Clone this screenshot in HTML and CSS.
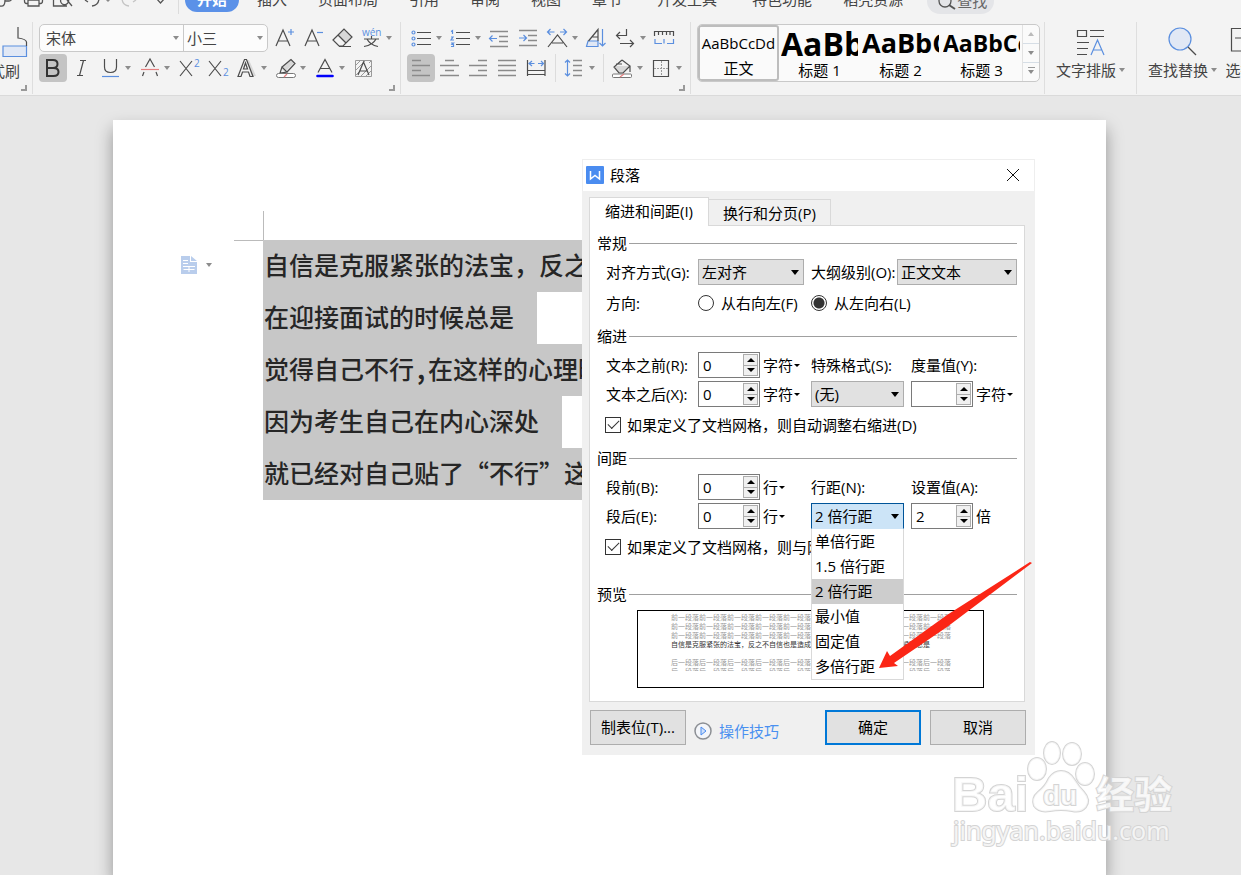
FILE: index.html
```html
<!DOCTYPE html>
<html lang="zh-CN">
<head>
<meta charset="utf-8">
<title>段落</title>
<link rel="stylesheet" href="styles.css">
</head>
<body>
<div class="app">
  <header class="ribbon">
    <nav class="menu">
      <div class="quick">
        <button class="quick-btn" aria-label="输出"><svg class="line" width="18" height="14"><path d="M0 6C4 7 5 4 5 0M5 1H9Q12 1 11-2"/></svg></button>
        <button class="quick-btn" aria-label="打印"><svg class="line" width="32" height="14"><path d="M10 3.5H8.500Q6.500 3.500 6.500 1V-1M21 3.500H22.500Q24.500 3.500 24.500 1V-1M10 0V6H21V0ZM10-1H21"/></svg></button>
        <button class="quick-btn" aria-label="打印预览"><svg class="line" width="30" height="14"><path d="M3.500-2V6H17M16-3a4 4 0 1 1-5 2M17 0L22 6"/></svg></button>
        <button class="quick-btn" aria-label="撤销"><svg class="line" width="36" height="14"><path d="M5 0L8 2M12 6Q19 5 19-2"/><path class="solid" d="M25-1H31L28 2Z"/></svg></button>
        <button class="quick-btn" aria-label="恢复"><svg class="line faint" width="34" height="14"><path d="M13 6Q6 5 6-2M20 0L17 2"/></svg></button>
        <button class="quick-btn" aria-label="更多"><svg class="line" width="28" height="14"><path d="M6-2L10.500 3L15-2"/></svg></button>
      </div>
      <button class="tab current">开始</button>
      <button class="tab">插入</button>
      <button class="tab">页面布局</button>
      <button class="tab">引用</button>
      <button class="tab">审阅</button>
      <button class="tab">视图</button>
      <button class="tab">章节</button>
      <button class="tab wide">开发工具</button>
      <button class="tab">特色功能</button>
      <button class="tab">稻壳资源</button>
      <button class="find"><svg class="line" width="20" height="24" viewBox="0 0 20 24"><circle cx="8" cy="12" r="6"/><path d="M12 16L18 20" stroke-width="2"/></svg>查找</button>
    </nav>

    <div class="groups">
      <section class="group clip">
        <button class="brush"><svg width="40" height="38" viewBox="0 0 40 38"><path class="fillb" d="M5 22H28.500V32.500H5Z"/><path class="dk" d="M20 3V14Q28 15 28.500 18V22"/></svg><span>格式刷</span></button>
        <svg class="launcher" width="8" height="8"><path d="M1 6H6V1"/></svg>
      </section>

      <section class="group">
        <div class="tools">
          <div class="combo">
            <label class="combo-font"><input type="text" value="宋体" aria-label="字体"><i class="caret"></i></label>
            <label class="combo-size"><input type="text" value="小三" aria-label="字号"><i class="caret"></i></label>
          </div>
          <button class="tool" aria-label="增大字号"><svg><path class="dk" d="M6 22L13 6L20 22M8 17H18"/><path class="bl" d="M18 8H24M21 5V11"/></svg></button>
          <button class="tool" aria-label="减小字号"><svg><path class="dk" d="M6 22L13 6L20 22M8 17H18"/><path class="bl" d="M18 8.500H24"/></svg></button>
          <button class="tool" aria-label="清除格式"><svg><path class="fillg" d="M10 11L16 5L24 13L18 19Z"/><path class="dk" d="M5 16L16 5L24 13L15 22H11ZM10 11L18 19M11 22.500H23"/></svg></button>
          <button class="tool more" aria-label="拼音指南"><svg><text class="tiny" x="5" y="12">wén</text><path class="dk" d="M7 15H22M14.500 12V15M10 15Q13 21 21 22.500M19 15Q16 21 7 22.500"/></svg><i class="caret"></i></button>
        </div>
        <div class="tools">
          <button class="tool on" aria-label="加粗"><svg class="sq"><path class="dk heavy" d="M8 6H14Q18.500 6 18.500 10T14 14H8ZM8 14H14.500Q19.500 14 19.500 18T14.500 22H8Z"/></svg></button>
          <button class="tool" aria-label="倾斜"><svg><path class="dk" d="M13 6.500H19M16.500 6.500L12.500 21.500M10 21.500H16"/></svg></button>
          <button class="tool more" aria-label="下划线"><svg><path class="dk" d="M8.500 5V13Q8.500 18.500 14.500 18.500T20.500 13V5"/><path class="bl" d="M6 22.500H23"/></svg><i class="caret"></i></button>
          <button class="tool more" aria-label="删除线"><svg><path class="dk" d="M10.500 13L15 5L19.500 13M9 18L7.500 22M21 18L22.500 22"/><path class="rd" d="M6 15.500H24"/></svg><i class="caret"></i></button>
          <button class="tool" aria-label="上标"><svg><path class="dk" d="M6 7L18 22M18 7L6 22"/><text class="tiny" x="20" y="13">2</text></svg></button>
          <button class="tool" aria-label="下标"><svg><path class="dk" d="M6 7L18 22M18 7L6 22"/><text class="tiny" x="20" y="22">2</text></svg></button>
          <button class="tool more" aria-label="文字效果"><svg><path class="fillg" d="M14 6H17L24 22H20Z"/><path class="dk" d="M6 22.500L12.500 5.500H14.500L21 22.500H18L16.500 18H10.500L9 22.500ZM11.500 15H15.500L13.500 9Z"/></svg><i class="caret"></i></button>
          <button class="tool more" aria-label="突出显示"><svg><path class="fillg" d="M10 14L19 5L23 9L14 18Z"/><path class="dk" d="M11 13L20 5.500L24 9.500L16 18M11 13L9 19L16 18Z"/><rect class="paper" x="5.500" y="19.500" width="19" height="4" rx="2"/><path class="rd" d="M13 23L16 20"/></svg><i class="caret"></i></button>
          <button class="tool more" aria-label="字体颜色"><svg><path class="dk" d="M8 18.500L15 5.500L22 18.500M10.500 14.500H19.500"/><path class="ink" d="M7.500 22H22.500"/></svg><i class="caret"></i></button>
          <button class="tool" aria-label="字符底纹"><svg><path class="gr" d="M6.500 6.500H22.500V22.500H6.500ZM7 11L11 7M7 16L16 7M12 22L22 12M17 22L22 17M7 21L10 18M20 9L22 7"/><path class="dk" d="M9 21L14.500 8L20 21M11 17H18"/></svg></button>
        </div>
        <svg class="launcher" width="8" height="8"><path d="M1 6H6V1"/></svg>
      </section>

      <section class="group">
        <div class="tools">
          <button class="tool more" aria-label="项目符号"><svg><g class="bl"><circle cx="6.500" cy="8.500" r="1.500"/><circle cx="6.500" cy="14.500" r="1.500"/><circle cx="6.500" cy="20.500" r="1.500"/></g><path class="dk" d="M10 8.500H24M10 14.500H24M10 20.500H24"/></svg><i class="caret"></i></button>
          <button class="tool more" aria-label="编号"><svg><path class="bl" d="M5 7.500L6.500 6.500V10M5 13H7L5 16H8M5 19H7.500L6 20.500H7.500V22.500H5"/><path class="dk" d="M10 8.500H24M10 14.500H24M10 20.500H24"/></svg><i class="caret"></i></button>
          <button class="tool" aria-label="减少缩进量"><svg><path class="gr2" d="M5 7.500H23M14 12.500H23M14 17.500H23M5 22.500H23"/><path class="bl" d="M12 14.500H4.500M7.500 11.500L4.500 14.500L7.500 17.500"/></svg></button>
          <button class="tool" aria-label="增加缩进量"><svg><path class="gr2" d="M5 6.500H23M14 11.500H23M14 16.500H23M5 21.500H23"/><path class="bl" d="M5 14H12.500M9.500 11L12.500 14L9.500 17"/></svg></button>
          <button class="tool more" aria-label="中文版式"><svg><path class="dk" d="M5 23L14.500 11L24 23M9 19H20"/><path class="bl" d="M11.500 8H4.500M7.500 5L4.500 8L7.500 11M17 8H23.500M20.500 5L23.500 8L20.500 11"/></svg><i class="caret"></i></button>
          <button class="tool" aria-label="排序"><svg><path class="fillb" d="M6 17H16V22.500H4.500Z"/><path class="dk" d="M6.500 17L16 5.500V17M10.500 13H16"/><path class="bl" d="M20.500 5V22M17.500 19L20.500 22L23.500 19"/></svg></button>
          <button class="tool more" aria-label="显示段落标记"><svg><path class="dk" d="M15.500 5V11.500H5.500M9 8L5.500 11.500L9 15M9 19.500H22.500M19 16L22.500 19.500L19 23"/></svg><i class="caret"></i></button>
          <button class="tool" aria-label="制表位"><svg><path class="dk" d="M4.500 12V7.500H23.500V12M8.500 8V11M12.500 8V11M16.500 8V11M20 8V11"/><path class="bl" d="M5 15V19.500H12M14 15V19.500M17 19.500H23.500V15"/></svg></button>
        </div>
        <div class="tools">
          <button class="tool on" aria-label="左对齐"><svg class="sq"><path class="gr2" d="M5 6.500H14M5 11.500H23M5 16.500H14M5 21.500H23"/></svg></button>
          <button class="tool" aria-label="居中对齐"><svg><path class="gr2" d="M10 6.500H19M5 11.500H24M10 16.500H19M5 21.500H24"/></svg></button>
          <button class="tool" aria-label="右对齐"><svg><path class="gr2" d="M14 6.500H23M5 11.500H23M14 16.500H23M5 21.500H23"/></svg></button>
          <button class="tool" aria-label="两端对齐"><svg><path class="gr2" d="M5 6.500H23M5 11.500H23M5 16.500H23M5 21.500H23"/></svg></button>
          <button class="tool" aria-label="分散对齐"><svg><path class="dk" d="M5.500 6V22M23 6V22M6 16.500H23M6 20.500H23"/><path class="bl" d="M7 9.500H12.500M10 7L7 9.500L10 12M16 9.500H21.500M19 7L21.500 9.500L19 12"/></svg></button>
          <i class="split"></i>
          <button class="tool more" aria-label="行距"><svg><path class="bl" d="M7.500 6V22M5 8.500L7.500 6L10 8.500M5 19.500L7.500 22L10 19.500"/><path class="gr2" d="M13 6.500H22M13 11.500H22M13 16.500H22M13 21.500H22"/></svg><i class="caret"></i></button>
          <i class="split"></i>
          <button class="tool more" aria-label="底纹颜色"><svg><path class="fillg" d="M6 12H22L15 19H11Z"/><path class="dk" d="M14 6L22 12L15 19H11L6 13L14 6M8 10H14M22 12V18"/><rect class="paper" x="4.500" y="20" width="19" height="3.500" rx="1"/><path class="rd" d="M12 23L16 20"/></svg><i class="caret"></i></button>
          <button class="tool more" aria-label="边框"><svg><path class="dk" d="M6.500 6.500H21.500V22.500H6.500Z"/><path class="gr dash" d="M14.500 7V22M7 14.500H21"/></svg><i class="caret"></i></button>
        </div>
        <svg class="launcher" width="8" height="8"><path d="M1 6H6V1"/></svg>
      </section>

      <section class="group">
        <div class="gallery">
          <button class="style picked"><span class="sample">AaBbCcDd</span><span>正文</span></button>
          <button class="style"><span class="sample h1">AaBbCc</span><span>标题 1</span></button>
          <button class="style"><span class="sample h2">AaBbCc</span><span>标题 2</span></button>
          <button class="style"><span class="sample h3">AaBbCc</span><span>标题 3</span></button>
          <div class="scroller">
            <button aria-label="向上"><i class="caret up"></i></button>
            <button aria-label="向下"><i class="caret"></i></button>
            <button aria-label="全部样式"><i class="caret bar"></i></button>
          </div>
        </div>
      </section>

      <section class="group">
        <button class="big"><svg width="34" height="36" viewBox="0 0 34 36"><path class="dk" d="M4.500 6.500H13.500V12.500H4.500ZM17 6.500H31M17 12.500H31M4 18.500H16M4 24.500H15M4 30.500H14"/><path class="bl" d="M18 31L24.500 16L31 31M20 26H29"/></svg><span class="big-text">文字排版<i class="caret"></i></span></button>
      </section>
      <section class="group last">
        <button class="big"><svg width="34" height="36" viewBox="0 0 34 36"><circle class="fillb" cx="15" cy="15" r="11"/><path class="dk" d="M23 23L31 31"/></svg><span class="big-text">查找替换<i class="caret"></i></span></button>
        <button class="big"><svg width="40" height="36" viewBox="0 0 40 36"><path class="dk" d="M7.500 4.500H34V27H7.500ZM11 14H20"/></svg><span class="big-text">选择<i class="caret"></i></span></button>
      </section>
    </div>
  </header>

  <main class="desk">
    <article class="page">
      <aside class="gutter">
        <div class="crop"></div>
        <button class="mark" aria-label="段落布局"><svg width="16" height="18" viewBox="0 0 16 18"><path fill="#b9cdec" d="M0 0H9V6H16V18H0ZM10 0L16 5H10Z"/><path stroke="#fff" fill="none" d="M2 4.500H7M2 7.500H7M2 10.500H14M2.500 13.500H13.500M8 11V16"/></svg><i class="caret"></i></button>
      </aside>
      <div class="text">
        <p><span>自信是克服紧张的法宝，反之不自信也是造成</span></p>
        <p><span class="end">在迎接面试的时候总是</span></p>
        <p><span>觉得自己不行<b>,</b>在这样的心理暗示下</span></p>
        <p><span class="end">因为考生自己在内心深处</span></p>
        <p><span>就已经对自己贴了“不行”这样的标签</span></p>
      </div>
    </article>
  </main>

  <form class="dialog" role="dialog" aria-label="段落">
    <div class="title">
      <svg width="18" height="18" viewBox="0 0 18 18"><rect width="18" height="18" rx="1" fill="#4a8cf0"/><path d="M4.500 5V13L9 9.500L13.500 13V5" fill="none" stroke="#fff" stroke-width="1.500"/></svg>
      <span>段落</span>
      <button type="button" class="close" aria-label="关闭"><svg width="14" height="14"><path d="M1 1L13 13M13 1L1 13" stroke="#111" fill="none"/></svg></button>
    </div>
    <div class="tabs">
      <button type="button" class="dtab active">缩进和间距(I)</button>
      <button type="button" class="dtab">换行和分页(P)</button>
    </div>
    <div class="panel">
      <h2>常规</h2>
      <div class="row general">
        <label for="align">对齐方式(G):</label>
        <span class="select"><select id="align"><option>左对齐</option></select></span>
        <label for="level" class="next">大纲级别(O):</label>
        <span class="select"><select id="level"><option>正文文本</option></select></span>
      </div>
      <div class="row direction">
        <span>方向:</span>
        <label class="radio rtl"><input type="radio" name="dir">从右向左(F)</label>
        <label class="radio"><input type="radio" name="dir" checked>从左向右(L)</label>
      </div>

      <h2>缩进</h2>
      <div class="grid">
        <label for="before">文本之前(R):</label>
        <span class="spin"><input id="before" type="text" value="0"><span class="steps"><button type="button" aria-label="增加"></button><button type="button" aria-label="减少"></button></span></span>
        <button type="button" class="unit">字符<i class="drop"></i></button>
        <label for="special">特殊格式(S):</label>
        <label for="measure" class="span">度量值(Y):</label>
        <label for="after">文本之后(X):</label>
        <span class="spin"><input id="after" type="text" value="0"><span class="steps"><button type="button" aria-label="增加"></button><button type="button" aria-label="减少"></button></span></span>
        <button type="button" class="unit">字符<i class="drop"></i></button>
        <span class="select"><select id="special"><option>(无)</option></select></span>
        <span class="spin"><input id="measure" type="text" value=""><span class="steps"><button type="button" aria-label="增加"></button><button type="button" aria-label="减少"></button></span></span>
        <button type="button" class="unit">字符<i class="drop"></i></button>
      </div>
      <label class="check"><input type="checkbox" checked>如果定义了文档网格，则自动调整右缩进(D)</label>

      <h2>间距</h2>
      <div class="grid">
        <label for="above">段前(B):</label>
        <span class="spin"><input id="above" type="text" value="0"><span class="steps"><button type="button" aria-label="增加"></button><button type="button" aria-label="减少"></button></span></span>
        <button type="button" class="unit">行<i class="drop"></i></button>
        <label for="leading">行距(N):</label>
        <label for="value" class="span">设置值(A):</label>
        <label for="below">段后(E):</label>
        <span class="spin"><input id="below" type="text" value="0"><span class="steps"><button type="button" aria-label="增加"></button><button type="button" aria-label="减少"></button></span></span>
        <button type="button" class="unit">行<i class="drop"></i></button>
        <span class="select open"><select id="leading"><option>2 倍行距</option></select>
          <ul class="options" role="listbox">
            <li role="option">单倍行距</li>
            <li role="option">1.5 倍行距</li>
            <li role="option" class="hover">2 倍行距</li>
            <li role="option">最小值</li>
            <li role="option">固定值</li>
            <li role="option">多倍行距</li>
          </ul>
        </span>
        <span class="spin"><input id="value" type="text" value="2"><span class="steps"><button type="button" aria-label="增加"></button><button type="button" aria-label="减少"></button></span></span>
        <span class="unit">倍</span>
      </div>
      <label class="check"><input type="checkbox" checked>如果定义了文档网格，则与网格对齐(W)</label>

      <h2 class="apart">预览</h2>
      <div class="preview">
        <p>前一段落前一段落前一段落前一段落前一段落前一段落前一段落前一段落前一段落前一段落</p>
        <p>前一段落前一段落前一段落前一段落前一段落前一段落前一段落前一段落前一段落前一段落</p>
        <p>前一段落前一段落前一段落前一段落前一段落前一段落前一段落前一段落前一段落前一段落</p>
        <p class="own">自信是克服紧张的法宝，反之不自信也是造成紧张的根源，在迎接面试的时候我总是</p>
        <p>后一段落后一段落后一段落后一段落后一段落后一段落后一段落后一段落后一段落后一段落</p>
        <p class="cut">后一段落后一段落后一段落后一段落后一段落后一段落后一段落后一段落后一段落后一段落</p>
      </div>
    </div>
    <div class="actions">
      <button type="button" class="push">制表位(T)...</button>
      <a href="#" class="tips"><svg width="18" height="18" viewBox="0 0 18 18"><circle cx="9" cy="9" r="8" fill="#f4f6fa" stroke="#8c8f94" stroke-width="1.500"/><path d="M7 5L12 9L7 13Z" fill="#cfe0fa" stroke="#4a8cf0"/></svg>操作技巧</a>
      <button type="button" class="push main">确定</button>
      <button type="button" class="push">取消</button>
    </div>
    <svg class="pointer" width="156" height="112" viewBox="0 0 156 112"><path fill="#fb2616" d="M1 107L9 90L12 95L69 54L152 1L154 2L69 66L16 102L20 105Z"/></svg>
  </form>

  <svg class="watermark" width="240" height="116" viewBox="0 0 240 116" aria-label="Baidu 经验">
    <g class="wm">
      <text class="wm-a" x="9" y="72">Bai</text>
      <g transform="translate(27 1)">
        <ellipse cx="67" cy="29" rx="9" ry="11"/><ellipse cx="82" cy="13" rx="8" ry="11"/><ellipse cx="102" cy="14" rx="9" ry="11"/><ellipse cx="115" cy="34" rx="9" ry="11"/>
        <path d="M91 31Q99 31 104 39T114 52Q121 60 116 67Q111 73 102 71Q91 69 80 71Q69 73 64 66Q61 58 68 52Q75 47 79 38Q84 31 91 31Z"/>
      </g>
      <text class="wm-d" x="100" y="66">du</text>
      <text class="wm-c" x="153" y="69">经验</text>
      <text class="wm-u" x="10" y="101">jingyan.baidu.com</text>
    </g>
  </svg>
</div>
</body>
</html>
```
FILE: styles.css
```css
* { box-sizing: border-box; }
body {
  margin: 0;
  font: 15px/22px "Open Sans", "Noto Sans CJK SC", sans-serif;
  color: #000;
}
button, input, select { font: inherit; color: inherit; margin: 0; padding: 0; border: 0; background: none; border-radius: 0; }
button { white-space: nowrap; }
h2, p, ul { margin: 0; padding: 0; }
svg { display: block; flex: none; }

.app { position: relative; height: 100vh; overflow: hidden; display: flex; flex-direction: column; background: #e7e7e7; }

/* ribbon */
.ribbon { flex: none; background: #f3f3f3; border-bottom: 1px solid #dadada; color: #444; overflow: hidden; }
.menu { height: 22px; display: flex; align-items: flex-start; overflow: hidden; }
.quick { display: flex; width: 179px; height: 14px; flex: none; border-right: 1px solid #dcdcdc; margin-right: 6px; }
.tab { flex: none; height: 24px; line-height: 22px; margin: -12px 31px 0 0; padding-bottom: 2px; }
.tab.current { width: 54px; background: #5b91e8; color: #fff; font-weight: 700; border-radius: 12px; margin-right: 18px; }
.tab.wide { padding: 0 4px 2px; }
.find { flex: none; display: flex; align-items: center; width: 67px; height: 26px; margin: -12px 0 0 -7px; padding: 0 0 1px 10px; border-radius: 13px; background: #e4e5e8; color: #666; }
.line { fill: none; stroke: #555; stroke-width: 1.3; }
.line .solid { fill: #888; stroke: none; }
.faint { stroke: #c4c4c4; }

.groups { display: flex; height: 72px; margin-bottom: 1px; }
.group { flex: none; display: flex; flex-direction: column; gap: 2px; padding: 2px 4px 0 6px; border-right: 1px solid #dedede; }
.group.clip { width: 33px; padding-left: 0; align-items: flex-end; }
.group.last { flex-direction: row; border: 0; gap: 1px; }
.launcher { align-self: flex-end; fill: none; stroke: #999; stroke-width: 2; }
.tools { display: flex; height: 28px; }
.tool { display: flex; align-items: center; flex: none; }
.tool svg { width: 29px; height: 28px; }
.tool svg.sq { width: 28px; }
.tool.on { background: #c4c4c4; border-radius: 4px; }
.tools .more { width: 39px; }
.caret { display: block; flex: none; width: 0; height: 0; border: 3px solid transparent; border-top: 4px solid #8c8c8c; border-bottom: 0; }
.caret.up { border-top: 0; border-bottom: 4px solid #bbb; }
.split { width: 1px; margin: 0 4px; background: #dcdcdc; }

.dk, .bl, .rd, .gr, .gr2, .ink { fill: none; stroke: #4c4c4c; stroke-width: 1.2; }
.bl { stroke: #5b8fdf; }
.rd { stroke: #e58080; }
.gr { stroke: #999; stroke-width: 1; }
.gr2 { stroke: #8a8a8a; stroke-width: 1.6; }
.dash { stroke-dasharray: 2 1; }
.ink { stroke: #0000fb; stroke-width: 2.6; stroke-linecap: round; }
.heavy { stroke: #333; stroke-width: 2; }
.fillg { fill: #d8d8d8; }
.fillb { fill: #e1e8f5; stroke: #5b8fdf; stroke-width: 1.2; }
.paper { fill: #fff; stroke: #777; }
.tiny { font-size: 10px; fill: #5b8fdf; }

.combo { display: flex; width: 229px; margin-right: 2px; border: 1px solid #c9c9c9; border-radius: 5px; background: #fcfcfc; overflow: hidden; }
.combo label { display: flex; align-items: center; padding: 0 4px 0 6px; min-width: 0; }
.combo label.combo-font { width: 143px; flex: none; }
.combo label.combo-size { flex: 1; border-left: 1px solid #c9c9c9; padding-left: 3px; }
.combo input { flex: 1; width: 0; min-width: 0; outline: 0; }

.brush { width: 60px; display: flex; flex-direction: column; align-items: flex-end; padding-right: 8px; height: 58px; line-height: 18px; }
.brush svg { margin-right: -18px; width: 40px; }

.gallery { display: flex; height: 58px; width: 343px; border: 1px solid #c9c9c9; border-radius: 5px; background: #fafafa; overflow: hidden; color: #000; }
.style { width: 81px; display: flex; flex-direction: column; align-items: center; overflow: hidden; }
.style.picked { border: 2px solid #bdbdbd; border-radius: 3px; }
.style span { line-height: 22px; }
.style .sample { height: 34px; line-height: 34px; width: 77px; overflow: hidden; text-align: left; }
.style.picked .sample { height: 32px; text-align: center; line-height: 32px; }
.style .h1 { font-size: 32px; font-weight: 700; line-height: 38px; }
.style .h2 { font-size: 27px; font-weight: 700; line-height: 36px; }
.style .h3 { font-size: 23px; font-weight: 700; line-height: 36px; }
.scroller { flex: 1; display: flex; flex-direction: column; border-left: 1px solid #e2e2e2; }
.scroller button { flex: 1; display: grid; place-items: center; border-bottom: 1px solid #d6dee6; }
.scroller button:last-child { border: 0; }
.caret.bar { position: relative; }
.caret.bar::before { content: ""; position: absolute; left: -3px; top: -7px; width: 7px; height: 1px; background: #999; }

.big { display: flex; flex-direction: column; align-items: center; height: 60px; padding: 0 7px 0 5px; }
.last .big { padding-right: 1px; }
.big svg { margin-right: 2px; }
.big-text { display: flex; align-items: center; gap: 3px; line-height: 20px; }

/* document */
.desk { flex: 1; display: flex; padding: 24px 135px 0 113px; }
.page { flex: 1; display: flex; padding-top: 91px; background: #fff; box-shadow: 0 9px 16px rgba(0, 0, 0, .36); }
.gutter { width: 151px; flex: none; display: flex; flex-direction: column; }
.crop { width: 30px; height: 30px; align-self: flex-end; border: 1px solid #bbb; border-width: 0 1px 1px 0; }
.mark { display: flex; align-items: center; gap: 9px; margin: 15px 0 0 68px; width: 40px; }
.text { margin: 29px 0 0 -1px; flex: 1; min-width: 0; overflow: hidden; font: 500 25px/48px "Noto Sans CJK SC", sans-serif; color: #262626; white-space: nowrap; }
.text p { height: 52px; }
.text span { display: inline-block; height: 52px; background: #c7c7c7; padding-left: 1px; }
.text .end { padding-right: 23px; }
.text b { display: inline-block; width: 14px; text-align: center; }

/* dialog */
.dialog { position: absolute; left: 582px; top: 159px; width: 453px; background: #f0f0f0; padding-bottom: 10px; }
.title { display: flex; align-items: center; gap: 6px; height: 32px; padding: 0 14px 1px 3px; background: #fff; border: 1px solid #eee; border-bottom: 0; }
.close { margin-left: auto; }
.tabs { display: flex; align-items: flex-end; padding: 6px 7px 0; height: 34px; }
.dtab { height: 26px; width: 123px; border: 1px solid #d9d9d9; border-bottom: 0; }
.dtab.active { height: 29px; width: 120px; padding-bottom: 2px; background: #fff; position: relative; margin: 0 -1px -1px 0; z-index: 1; }
.panel { margin: 0 10px 0 7px; padding: 6px 7px 13px; background: #fff; border: 1px solid #d9d9d9; }
.panel h2 { display: flex; align-items: center; gap: 2px; font: inherit; }
.panel h2::after { content: ""; flex: 1; height: 1px; background: #a0a0a0; }
.row { display: flex; align-items: center; padding-left: 9px; white-space: nowrap; }
.general { display: grid; grid-template-columns: 92px 106px 93px 1fr; margin-top: 5px; height: 26px; }
.general .next { padding-left: 7px; }
.direction { height: 22px; margin: 7px 0 11px; }
.direction > span { width: 92px; }
.radio { display: flex; align-items: center; gap: 7px; }
.radio.rtl { width: 113px; }
.radio input { appearance: none; width: 16px; height: 16px; border: 1px solid #333; border-radius: 50%; background: #fff; }
.radio input:checked { background: radial-gradient(circle, #333 5px, #fff 6px); }
.select { position: relative; display: block; height: 26px; }
.select select { appearance: none; width: 100%; height: 26px; padding: 0 3px; background: #e1e1e1; border: 1px solid #adadad; outline: 0; }
.select::after { content: ""; position: absolute; right: 5px; top: 11px; border: 4px solid transparent; border-top: 5px solid #000; border-bottom: 0; pointer-events: none; }
.select.open select { background: #cce4f7; border-color: #005499; border-bottom-color: #cce4f7; }
.options { position: absolute; z-index: 2; left: 0; top: 26px; width: 93px; border: 1px solid #d9d9d9; border-top: 0; background: #fff; list-style: none; }
.options li { height: 25px; line-height: 24px; padding-left: 3px; white-space: nowrap; }
.options .hover { background: #cdcdcd; }
.grid { display: grid; grid-template-columns: 92px 62px 51px 93px 62px 1fr; row-gap: 3px; padding-left: 9px; margin-top: 5px; grid-auto-rows: 26px; align-items: center; white-space: nowrap; }
.grid > :nth-child(5), .grid > :nth-child(10) { margin-left: 7px; margin-right: -7px; }
.grid .span { grid-column: span 2; }
.grid .unit:last-child { padding-left: 10px; }
.spin { display: flex; height: 26px; border: 1px solid #7a7a7a; background: #fff; padding: 1px; }
.spin input { flex: 1; min-width: 0; padding-left: 3px; outline: 0; }
.steps { display: flex; flex-direction: column; width: 15px; }
.steps button { flex: 1; display: grid; place-items: center; background: #f0f0f0; border: 1px solid #adadad; }
.steps button + button { border-top: 0; }
.steps button::before { content: ""; border: 4px solid transparent; border-bottom: 4px solid #000; border-top: 0; }
.steps button + button::before { border-top: 4px solid #000; border-bottom: 0; }
.unit { display: flex; align-items: center; gap: 1px; padding-left: 3px; }
.drop { border: 3px solid transparent; border-top: 3px solid #000; border-bottom: 0; }
.check { display: flex; align-items: center; gap: 6px; height: 22px; margin: 7px 0 11px; padding-left: 8px; white-space: nowrap; }
.check input { appearance: none; width: 16px; height: 16px; border: 1px solid #333; background: #fff; display: grid; place-items: center; }
.check input:checked::before { content: ""; width: 10px; height: 5px; border: solid #333; border-width: 0 0 1px 1px; transform: rotate(-45deg); margin-top: -4px; }
.panel .apart { margin-top: 25px; }
.preview { height: 78px; margin: 5px 33px 0 40px; padding: 2px 33px 0; border: 1px solid #000; font-size: 7px; line-height: 9px; color: #999; overflow: hidden; white-space: nowrap; }
.preview p { height: 9px; }
.preview .own { color: #333; height: 18px; }
.preview .cut { height: 4px; overflow: hidden; }
.actions { display: flex; align-items: center; padding: 8px 9px 0 8px; }
.push { width: 96px; height: 35px; padding-bottom: 2px; background: #e1e1e1; border: 1px solid #adadad; }
.push.main { border: 2px solid #0078d7; margin: 0 9px 0 auto; }
.tips { display: flex; align-items: center; gap: 7px; padding: 6px 0 0 8px; color: #4a90f0; text-decoration: none; }
.pointer { position: absolute; left: 296px; top: 402px; z-index: 3; pointer-events: none; }

/* site mark */
.watermark { position: absolute; right: 58px; bottom: 20px; pointer-events: none; }
.wm { fill: #fff; fill-opacity: .75; stroke: #d4d4d4; stroke-width: 2; paint-order: stroke; }
.wm-a { font: 700 49px "Liberation Sans", sans-serif; }
.wm-d { font: 700 28px "Liberation Sans", sans-serif; }
.wm-c { font: 700 38px "Noto Sans CJK SC", sans-serif; }
.wm-u { font: 25px "Noto Sans", sans-serif; }
```
